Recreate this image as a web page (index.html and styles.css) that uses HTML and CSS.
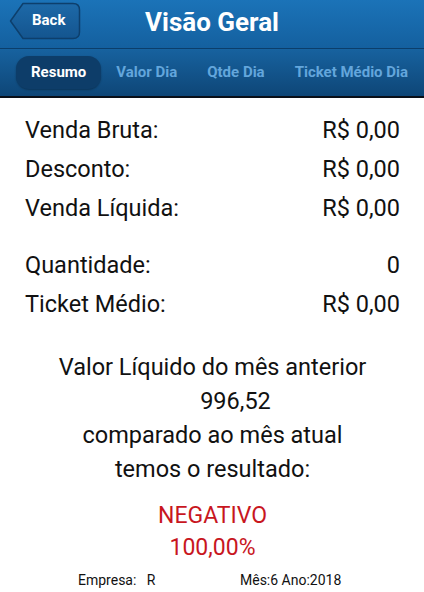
FILE: index.html
```html
<!DOCTYPE html>
<html lang="pt">
<head>
    <meta charset="UTF-8">
    <meta name="viewport" content="width=device-width, initial-scale=1.0">
    <title>Visão Geral</title>
    <link rel="stylesheet" href="styles.css">
</head>
<body>
    <div class="topo">
        <div class="barra-titulo">
            <div class="voltar">
                <svg class="voltar-forma" width="72" height="38" viewBox="0 0 72 38">
                    <defs>
                        <linearGradient id="gv" x1="0" y1="0" x2="0" y2="1">
                            <stop offset="0" stop-color="#1d69a8"/>
                            <stop offset="1" stop-color="#14558f"/>
                        </linearGradient>
                    </defs>
                    <path d="M14 1.5 H64 Q70.5 1.5 70.5 8 V30 Q70.5 36.5 64 36.5 H14 L1.5 19 Z" fill="url(#gv)" stroke="#0d3f6c" stroke-width="1.5" stroke-linejoin="round"/>
                </svg>
                <span class="voltar-texto">Back</span>
            </div>
            <h1 class="titulo">Visão Geral</h1>
            <div></div>
        </div>
        <div class="abas">
            <span class="aba ativa">Resumo</span>
            <span class="aba">Valor Dia</span>
            <span class="aba">Qtde Dia</span>
            <span class="aba">Ticket Médio Dia</span>
        </div>
    </div>

    <div class="conteudo">
        <div class="linhas">
            <div class="linha"><span>Venda Bruta:</span><span>R$ 0,00</span></div>
            <div class="linha"><span>Desconto:</span><span>R$ 0,00</span></div>
            <div class="linha"><span>Venda Líquida:</span><span>R$ 0,00</span></div>
        </div>
        <div class="linhas separado">
            <div class="linha"><span>Quantidade:</span><span>0</span></div>
            <div class="linha"><span>Ticket Médio:</span><span>R$ 0,00</span></div>
        </div>

        <div class="comparativo">
            <p>Valor Líquido do mês anterior</p>
            <p class="valor-anterior">996,52</p>
            <p>comparado ao mês atual</p>
            <p>temos o resultado:</p>
        </div>

        <div class="resultado">
            <p>NEGATIVO</p>
            <p>100,00%</p>
        </div>

        <div class="rodape">
            <span class="empresa">Empresa: &nbsp;&nbsp;R</span>
            <span class="periodo">Mês:6 Ano:2018</span>
        </div>
    </div>
</body>
</html>
```

FILE: styles.css
```css
body {
    margin: 0;
    font-family: Roboto, "Liberation Sans", Arial, sans-serif;
    background-color: #fff;
    color: #111;
}
.topo {
    border-bottom: 2px solid #0a0f18;
}
.barra-titulo {
    display: grid;
    grid-template-columns: 1fr auto 1fr;
    align-items: center;
    height: 48px;
    background: linear-gradient(#1b73b8, #14609f);
    border-bottom: 1px solid #0b3e6b;
    box-shadow: 0 1px 0 #2a6da4;
}
.voltar {
    display: grid;
    justify-self: start;
    margin-left: 9px;
    margin-top: -6px;
}
.voltar-forma, .voltar-texto {
    grid-area: 1 / 1;
}
.voltar-texto {
    align-self: center;
    padding-left: 23px;
    color: #fff;
    font-weight: bold;
    font-size: 15px;
    margin-top: -2px;
}
.titulo {
    margin: 0;
    margin-top: -4px;
    color: #fff;
    font-size: 26px;
    font-weight: bold;
}
.abas {
    display: flex;
    align-items: center;
    height: 47px;
    padding-left: 16px;
    overflow: hidden;
    background: linear-gradient(#17629f, #0e4677);
}
.aba {
    flex-shrink: 0;
    white-space: nowrap;
    padding: 0 15px;
    line-height: 33px;
    font-size: 15px;
    font-weight: bold;
    color: #63a6dc;
}
.aba.ativa {
    padding: 0 15px;
    color: #fff;
    background: #0d3d69;
    border-radius: 13px;
    box-shadow: 0 1px 2px rgba(0, 0, 0, 0.3);
}
.conteudo {
    padding: 13px 24px 0 25px;
}
.linha {
    display: flex;
    justify-content: space-between;
    height: 39px;
    line-height: 39px;
    font-size: 23.5px;
}
.separado {
    margin-top: 18px;
}
.comparativo {
    margin-top: 26px;
    text-align: center;
    font-size: 23.5px;
}
.comparativo p, .resultado p {
    margin: 0;
}
.comparativo p {
    line-height: 34px;
}
.valor-anterior {
    padding-left: 46px;
}
.resultado {
    margin-top: 14px;
    text-align: center;
    font-size: 23px;
    color: #c8161e;
}
.resultado p {
    line-height: 32px;
}
.rodape {
    display: flex;
    margin-top: 8px;
    padding-left: 53px;
    font-size: 14px;
    line-height: 16px;
}
.empresa {
    width: 162px;
}
```
